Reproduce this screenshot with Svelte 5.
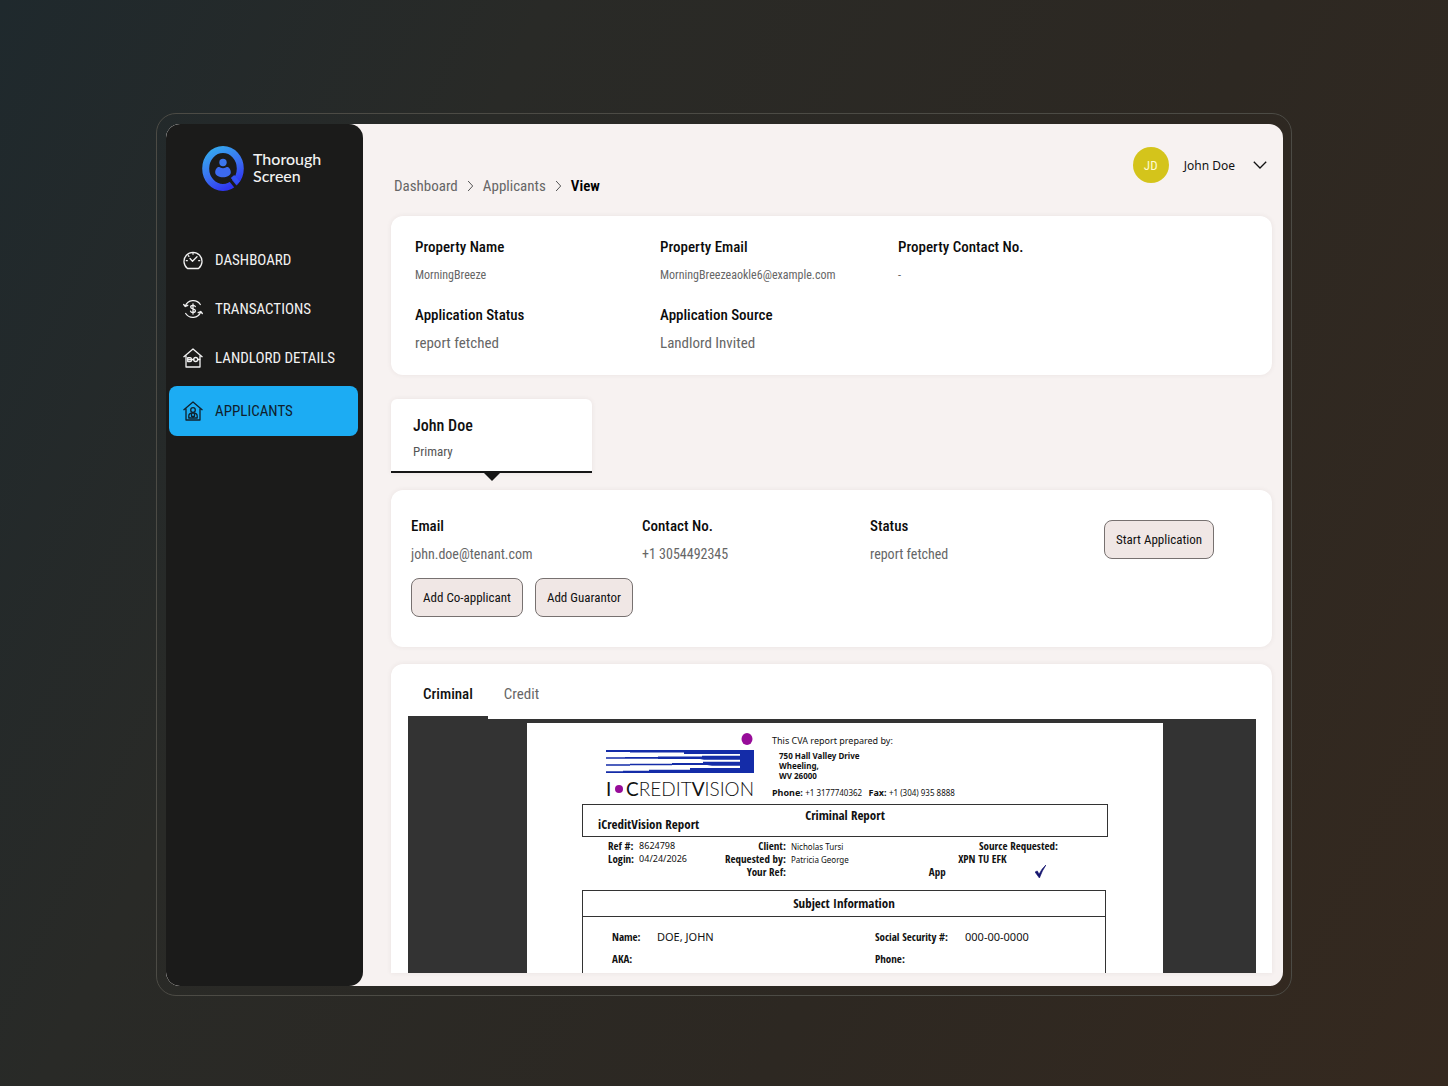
<script lang="ts">
	type NavItem = { label: string; icon: 'gauge' | 'money' | 'landlord' | 'applicant' };

	const navItems: NavItem[] = [
		{ label: 'DASHBOARD', icon: 'gauge' },
		{ label: 'TRANSACTIONS', icon: 'money' },
		{ label: 'LANDLORD DETAILS', icon: 'landlord' },
		{ label: 'APPLICANTS', icon: 'applicant' }
	];

	const property = [
		{ label: 'Property Name', value: 'MorningBreeze', small: true },
		{ label: 'Property Email', value: 'MorningBreezeaokle6@example.com', small: true },
		{ label: 'Property Contact No.', value: '-', small: true },
		{ label: 'Application Status', value: 'report fetched' },
		{ label: 'Application Source', value: 'Landlord Invited' }
	];

	const contact = [
		{ label: 'Email', value: 'john.doe@tenant.com' },
		{ label: 'Contact No.', value: '+1 3054492345' },
		{ label: 'Status', value: 'report fetched' }
	];

	const reports = ['Criminal', 'Credit'];

	let activeNav = $state('APPLICANTS');
	let activeReport = $state('Criminal');
</script>

<div class="page">
	<div class="frame">
		<div class="window">
			<aside class="sidebar">
				<div class="brand">
					<svg class="brand-mark" viewBox="0 0 42 46" aria-hidden="true">
						<defs>
							<linearGradient id="brand" x1="0.2" y1="0" x2="0.7" y2="1">
								<stop offset="0" stop-color="#35a5ee" />
								<stop offset="0.55" stop-color="#3a6ff0" />
								<stop offset="1" stop-color="#2f35f2" />
							</linearGradient>
						</defs>
						<ellipse cx="21" cy="22.500" rx="17.300" ry="19" fill="none" stroke="url(#brand)" stroke-width="7" />
						<path d="M30.500 30.500l5.500 6.500" stroke="#3352f1" stroke-width="4.500" />
						<path d="M26.500 32l8.500 10.500" stroke="#1b1b1a" stroke-width="2.800" />
						<circle cx="21" cy="16.500" r="3.700" fill="#3c76ee" />
						<path d="M13.200 26.500c0-3.500 2-5.500 4-5.500 1 0 2 1.300 3.800 1.300s2.800-1.300 3.800-1.300c2 0 4 2 4 5.500 0 3-4 4.800-7.800 4.800s-7.800-1.800-7.800-4.800z" fill="#3c6aef" />
					</svg>
					<span class="brand-name">Thorough<br />Screen</span>
				</div>

				<nav class="nav">
					{#each navItems as item}
						<button class="nav-item" class:active={activeNav === item.label} onclick={() => (activeNav = item.label)}>
							<svg class="nav-icon" viewBox="0 0 20 20" aria-hidden="true">
								{#if item.icon === 'gauge'}
									<path d="M4.500 18.500a9 9 0 1 1 11 0z" />
									<path d="M7 8.500l2.500 2.700L14 6.700M10 3.200v1M3.300 10.700h1M15.700 10.700h1M5.300 5.700l.6.6" />
								{:else if item.icon === 'money'}
									<path d="M2.300 7a8.500 8.500 0 0 1 15-1.500M17.700 13a8.500 8.500 0 0 1-15 1.500M.700 5.500l1.600 2 2.500-1.200M19.300 14.500l-1.600-2-2.500 1.200" />
									<path d="M12.300 7.600c-.4-.9-1.200-1.200-2.300-1.200-1.300 0-2.300.6-2.300 1.700 0 2.400 4.700 1.200 4.700 3.700 0 1.200-1.100 1.800-2.400 1.800-1.200 0-2.200-.5-2.500-1.500M10 5v10" />
								{:else if item.icon === 'landlord'}
									<path d="M.900 8.700L10 1l9.100 7.700M3 8v11h14V8" />
									<circle cx="12.700" cy="11.500" r="2" />
									<path d="M4.700 9.700h2.500c1.500 0 1.500 1.800 0 1.800H4.700h2.500c1.800 0 1.800 2 0 2H4.700zM8.800 11.500h1.900M14.700 11.500h2" />
								{:else}
									<path d="M.900 8.700L10 1l9.100 7.700M3 8v11h14V8" />
									<circle cx="10" cy="9" r="2.300" />
									<path d="M5.800 17v-2c0-2 1.500-3 4.200-3s4.200 1 4.200 3v2zM8.500 12.300v3h3v-3M10 15.300V17" />
								{/if}
							</svg>
							{item.label}
						</button>
					{/each}
				</nav>
			</aside>

			<main class="content">
				<header class="topbar">
					<nav class="breadcrumb" aria-label="Breadcrumb">
						<a href="#dashboard">Dashboard</a>
						<svg viewBox="0 0 6 12" aria-hidden="true"><path d="M.6 1l4.600 5-4.600 5" /></svg>
						<a href="#applicants">Applicants</a>
						<svg viewBox="0 0 6 12" aria-hidden="true"><path d="M.6 1l4.600 5-4.600 5" /></svg>
						<strong>View</strong>
					</nav>
					<button class="user">
						<span class="avatar">JD</span>
						<span>John Doe</span>
						<svg viewBox="0 0 14 8" aria-hidden="true"><path d="M.800.8L7 7l6.200-6.200" /></svg>
					</button>
				</header>

				<section class="card property">
					{#each property as field}
						<div class="field">
							<h3>{field.label}</h3>
							<p class:small={field.small}>{field.value}</p>
						</div>
					{/each}
				</section>

				<button class="person">
					<span class="person-name">John Doe</span>
					<span class="person-role">Primary</span>
				</button>

				<section class="card contact">
					<div class="contact-grid">
						{#each contact as field}
							<div class="field">
								<h3>{field.label}</h3>
								<p>{field.value}</p>
							</div>
						{/each}
						<div><button class="btn start">Start Application</button></div>
					</div>
					<div class="actions">
						<button class="btn">Add Co-applicant</button>
						<button class="btn">Add Guarantor</button>
					</div>
				</section>

				<section class="card reports">
					<div class="tabs" role="tablist">
						{#each reports as name}
							<button class="tab" role="tab" aria-selected={activeReport === name} class:active={activeReport === name} onclick={() => (activeReport = name)}>{name}</button>
						{/each}
					</div>

					<div class="viewer">
						<article class="sheet">
							<div class="sheet-head">
								<div class="bureau">
									<svg class="bureau-mark" viewBox="0 0 148 41" aria-hidden="true">
										<ellipse cx="141" cy="6" rx="5.500" ry="6" fill="#970c99" />
										<path d="M134 17h14v23h-14z" fill="#142ca8" />
										<path d="M0 17h135v4H78v-1.500H24V19H0z" fill="#142ca8" />
										<path d="M0 24.300h19v-.3h33v-.5h44v-.8h39v4H98l-4-.7H52v-.2H0z" fill="#142ca8" />
										<path d="M0 31.200h24v-.4h42v-.7h31v-1.300h38v4H106l-5-.8H66v.3H24v.4H0z" fill="#142ca8" />
										<path d="M0 38.300h17v-.5h26v-1h41v-1.700h51V40H0z" fill="#142ca8" />
									</svg>
									<div class="bureau-name"><b>I</b><i></i><span><em>C</em>REDIT<em>V</em>ISION</span></div>
								</div>
								<div class="prepared">
									<p class="intro">This CVA report prepared by:</p>
									<address>750 Hall Valley Drive<br />Wheeling,<br />WV 26000</address>
									<p class="phones"><b>Phone:</b> <span>+1 3177740362</span> <b class="fax">Fax:</b> <span>+1 (304) 935 8888</span></p>
								</div>
							</div>

							<div class="title-box">
								<h2>Criminal Report</h2>
								<h4>iCreditVision Report</h4>
							</div>

							<div class="meta">
								<dl class="ref">
									<dt>Ref #:</dt><dd>8624798</dd>
									<dt>Login:</dt><dd>04/24/2026</dd>
								</dl>
								<dl class="client">
									<dt>Client:</dt><dd>Nicholas Tursi</dd>
									<dt>Requested by:</dt><dd>Patricia George</dd>
									<dt>Your Ref:</dt><dd></dd>
								</dl>
								<div class="source">
									<b class="source-title">Source Requested:</b>
									<b class="source-list">XPN TU EFK</b>
									<b>App</b>
									<svg viewBox="0 0 10 12" aria-label="Selected" role="img"><path d="M0 6.500l2-1L3.700 8.500Q6 3.500 10 0 6.500 5 4 12z" fill="#13136e" stroke="#13136e" stroke-width=".6" /></svg>
								</div>
							</div>

							<div class="subject">
								<h2>Subject Information</h2>
								<dl>
									<dt>Name:</dt><dd>DOE, JOHN</dd>
									<dt>Social Security #:</dt><dd>000-00-0000</dd>
									<dt>AKA:</dt><dd></dd>
									<dt>Phone:</dt><dd></dd>
								</dl>
							</div>
						</article>
					</div>
				</section>
			</main>
		</div>
	</div>
</div>

<style>
	:global(body) {
		margin: 0;
	}

	.page {
		--ui: 'Roboto Condensed', Roboto, sans-serif;
		--doc: 'Noto Sans', sans-serif;
		--doc-bold: 'Open Sans Condensed', 'Noto Sans', sans-serif;
		box-sizing: border-box;
		height: 100vh;
		padding: 113px 156px 90px;
		display: flex;
		background: linear-gradient(115deg, #1f292d 0%, #292a27 28%, #2d2822 65%, #35291f 100%);
		font-family: var(--ui);
		color: #111;
	}

	.page * {
		box-sizing: border-box;
	}

	h2,
	h3,
	h4,
	p,
	dl,
	dd {
		margin: 0;
	}

	button {
		font-family: inherit;
		border: none;
		cursor: pointer;
		color: inherit;
	}

	.frame {
		flex: 1;
		display: flex;
		min-width: 0;
		padding: 10px 8px 9px 9px;
		border: 1px solid #4c4b45;
		border-radius: 20px;
	}

	.window {
		flex: 1;
		display: flex;
		min-width: 0;
		border-radius: 14px;
		background: #f7f2f1;
		overflow: hidden;
	}

	.sidebar {
		flex: 0 0 197px;
		border-radius: 14px;
		background: #1b1b1a;
		color: #f2f2f2;
	}

	.brand {
		display: flex;
		align-items: center;
		gap: 9px;
		padding: 22px 0 0 36px;
	}

	.brand-mark {
		width: 42px;
		height: 46px;
	}

	.brand-name {
		padding-bottom: 4px;
		font-family: Lato, sans-serif;
		font-size: 16px;
		line-height: 17px;
		font-weight: 500;
	}

	.nav {
		display: flex;
		flex-direction: column;
		margin-top: 43px;
		padding: 0 5px 0 3px;
	}

	.nav-item {
		display: flex;
		align-items: center;
		gap: 12px;
		height: 49px;
		padding: 0 14px;
		border-radius: 8px;
		background: none;
		font-size: 15px;
	}

	.nav-item.active {
		height: 50px;
		margin-top: 4px;
		background: #1cacf3;
		color: #10202c;
	}

	.nav-icon {
		width: 20px;
		height: 20px;
		fill: none;
		stroke: currentColor;
		stroke-width: 1.300;
		stroke-linecap: round;
		stroke-linejoin: round;
	}

	.content {
		flex: 1;
		min-width: 0;
		display: flex;
		flex-direction: column;
		padding: 0 11px 13px 28px;
	}

	.topbar {
		flex: none;
		display: flex;
		justify-content: space-between;
		height: 92px;
		padding: 23px 5px 20px 3px;
	}

	.breadcrumb {
		align-self: flex-end;
		display: flex;
		align-items: center;
		gap: 9px;
		font-size: 15px;
		line-height: 20px;
	}

	.breadcrumb a {
		color: #666;
		text-decoration: none;
	}

	.breadcrumb strong {
		font-weight: 600;
		color: #000;
	}

	.breadcrumb svg {
		width: 7px;
		height: 12px;
		fill: none;
		stroke: #555;
	}

	.user {
		align-self: flex-start;
		display: flex;
		align-items: center;
		gap: 15px;
		padding: 0;
		background: none;
		font-family: 'Noto Sans', sans-serif;
		font-size: 12px;
	}

	.user svg {
		width: 14px;
		height: 8px;
		margin-left: 3px;
		fill: none;
		stroke: #111;
		stroke-width: 1.300;
	}

	.avatar {
		display: grid;
		place-items: center;
		width: 36px;
		height: 36px;
		border-radius: 50%;
		background: #d4c41b;
		color: #fffbd0;
		font-family: var(--ui);
		font-size: 13px;
	}

	.card {
		flex: none;
		border-radius: 12px;
		background: #fff;
		box-shadow: 0 0 5px rgba(80, 50, 50, 0.08);
	}

	.property {
		display: grid;
		grid-template-columns: 245fr 238fr 350fr;
		row-gap: 20px;
		padding: 21px 24px 22px;
	}

	.field h3 {
		font-size: 15px;
		line-height: 20px;
		font-weight: 500;
		color: #0c0c0c;
	}

	.field p {
		margin-top: 8px;
		font-size: 15px;
		line-height: 20px;
		color: #666;
	}

	.field p.small {
		font-size: 12px;
	}

	.person {
		position: relative;
		flex: none;
		width: 201px;
		height: 74px;
		margin: 24px 0 17px;
		padding: 6px 22px 0;
		border-bottom: 2px solid #161616;
		border-radius: 6px 6px 0 0;
		background: #fff;
		text-align: left;
		box-shadow: 0 0 5px rgba(80, 50, 50, 0.08);
	}

	.person::after {
		content: '';
		position: absolute;
		top: 100%;
		left: 50%;
		margin-left: -10px;
		border: 10px solid transparent;
		border-top-color: #161616;
		border-bottom: none;
	}

	.person-name,
	.person-role {
		display: block;
	}

	.person-name {
		font-size: 16px;
		line-height: 22px;
		font-weight: 500;
	}

	.person-role {
		margin-top: 5px;
		font-size: 13px;
		line-height: 20px;
		color: #555;
	}

	.contact {
		padding: 26px 20px 30px;
	}

	.contact .field p {
		font-size: 14px;
	}

	.contact-grid {
		display: grid;
		grid-template-columns: 231fr 228fr 234fr 148fr;
	}

	.actions {
		display: flex;
		gap: 12px;
		margin-top: 14px;
	}

	.btn {
		height: 39px;
		padding: 0 11px;
		border: 1px solid #777170;
		border-radius: 8px;
		background: #f0e7e5;
		font-size: 13px;
		white-space: nowrap;
	}

	.start {
		margin-top: 4px;
	}

	.reports {
		flex: 1;
		min-height: 0;
		display: flex;
		flex-direction: column;
		margin-top: 17px;
		padding: 9px 16px 0 17px;
		border-radius: 12px 12px 0 0;
		overflow: hidden;
	}

	.tabs {
		flex: none;
		display: flex;
		gap: 1px;
	}

	.tab {
		height: 46px;
		padding: 0 15px 2px;
		border-bottom: 3px solid transparent;
		background: none;
		font-size: 15px;
		color: #666;
	}

	.tab.active {
		border-bottom-color: #333;
		font-weight: 500;
		color: #111;
	}

	.viewer {
		flex: 1;
		min-height: 0;
		display: flex;
		justify-content: center;
		padding-top: 4px;
		background: #333;
		overflow: hidden;
	}

	.sheet {
		flex: none;
		width: 75%;
		margin-left: 26px;
		padding: 10px 55px 0;
		background: #fff;
		font-family: var(--doc);
		font-size: 11px;
	}

	.sheet-head {
		display: flex;
		gap: 18px;
		height: 71px;
		padding-left: 24px;
	}

	.bureau {
		width: 148px;
	}

	.bureau-mark {
		display: block;
		width: 148px;
		height: 41px;
	}

	.bureau-name {
		display: flex;
		align-items: center;
		justify-content: space-between;
		font-family: Lato, sans-serif;
		font-size: 19px;
		line-height: 30px;
		font-weight: 300;
	}

	.bureau-name b,
	.bureau-name em {
		font-style: normal;
		font-weight: 400;
	}

	.bureau-name i {
		width: 8px;
		height: 8px;
		border-radius: 50%;
		background: #970c99;
	}

	.intro {
		font-size: 9px;
		line-height: 16px;
	}

	address {
		margin: 2px 0 0 7px;
		font-size: 8px;
		line-height: 10px;
		font-style: normal;
		font-weight: 700;
	}

	.phones {
		margin-top: 4px;
		font-size: 9px;
		line-height: 16px;
		white-space: nowrap;
	}

	.phones span {
		font-size: 8px;
	}

	.fax {
		margin-left: 4px;
	}

	.title-box {
		height: 33px;
		border: 1px solid #333;
	}

	h2,
	h4 {
		font-family: var(--doc-bold);
		font-size: 13px;
		font-weight: 700;
	}

	h2 {
		line-height: 20px;
		text-align: center;
	}

	h4 {
		margin: -7px 0 0 15px;
		line-height: 12px;
	}

	.meta {
		display: flex;
		height: 53px;
		padding: 2px 0 0 26px;
		font-size: 9px;
		line-height: 13px;
	}

	dt,
	.source b {
		font-family: var(--doc-bold);
		font-size: 11px;
		font-weight: 700;
	}

	.ref,
	.client {
		display: grid;
		grid-template-columns: auto auto;
		grid-auto-rows: 13px;
		column-gap: 5px;
		align-content: start;
	}

	.ref {
		width: 117px;
		justify-content: start;
	}

	.client {
		justify-items: end;
	}

	.client dd {
		justify-self: start;
		font-size: 8px;
		line-height: 15px;
	}

	.source {
		flex: 1;
		display: grid;
		grid-template-columns: auto auto;
		grid-auto-rows: 13px;
		margin: 0 50px 0 80px;
	}

	.source-title,
	.source-list {
		grid-column: 1 / 3;
	}

	.source-title {
		justify-self: end;
	}

	.source-list {
		justify-self: center;
		margin-right: 22px;
	}

	.source svg {
		justify-self: end;
		width: 11px;
		height: 13px;
		margin-right: 12px;
	}

	.subject {
		margin-right: 2px;
		border: 1px solid #333;
	}

	.subject h2 {
		padding: 2px 0 3px;
		border-bottom: 1px solid #333;
	}

	.subject dl {
		display: grid;
		grid-template-columns: 45px 218px 90px 1fr;
		row-gap: 2px;
		padding: 10px 0 60px 29px;
		line-height: 20px;
		white-space: nowrap;
	}
</style>
